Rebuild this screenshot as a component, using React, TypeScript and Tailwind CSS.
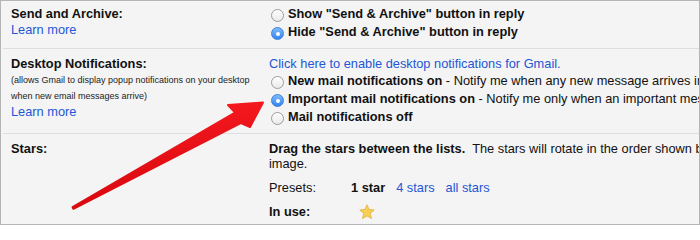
import React from "react";

function Radio({ checked }: { checked?: boolean }) {
  return checked ? (
    <span className="mt-[4px] ml-[2px] mr-[4px] flex size-[13px] shrink-0 items-center justify-center rounded-full border border-[#3b7fd9] bg-gradient-to-b from-[#7dbbfb] to-[#2f84f1]">
      <span className="size-[4px] rounded-full bg-white" />
    </span>
  ) : (
    <span className="mt-[4px] ml-[2px] mr-[4px] size-[13px] shrink-0 rounded-full border border-[#9c9c9c] bg-gradient-to-b from-white to-[#e9e9e9] shadow-[inset_0_1px_0_rgba(255,255,255,0.8)]" />
  );
}

function Item({ checked, children }: { checked?: boolean; children: React.ReactNode }) {
  return (
    <div className="flex h-[18px] items-start whitespace-nowrap">
      <Radio checked={checked} />
      <span className="leading-[18px]">{children}</span>
    </div>
  );
}

const link = "text-[#2356d4] cursor-pointer";

export default function App() {
  return (
    <div className="relative h-[225px] w-[700px] overflow-hidden border border-[#b5b5b5] bg-[#f4f4f4] font-['Liberation_Sans',Arial,sans-serif] text-[12.8px] leading-[16px] text-[#111]">
      {/* Row 1 */}
      <div className="ml-[2px] flex border-b border-[#dedede] pb-[7px] pl-[8px] pt-[4px]">
        <div className="w-[258px] shrink-0 pt-[1px]">
          <div className="font-bold">Send and Archive:</div>
          <div className={link}>Learn more</div>
        </div>
        <div className="flex flex-col">
          <Item>
            <b>Show "Send &amp; Archive" button in reply</b>
          </Item>
          <Item checked>
            <b>Hide "Send &amp; Archive" button in reply</b>
          </Item>
        </div>
      </div>

      {/* Row 2 */}
      <div className="ml-[2px] flex border-b border-[#dedede] pb-[7px] pl-[8px] pt-[7px]">
        <div className="w-[258px] shrink-0">
          <div className="font-bold">Desktop Notifications:</div>
          <div className="text-[9px] leading-[16px] text-[#222]">
            (allows Gmail to display popup notifications on your desktop
            <br />
            when new email messages arrive)
          </div>
          <div className={link}>Learn more</div>
        </div>
        <div className="flex flex-col whitespace-nowrap">
          <div className={link}>Click here to enable desktop notifications for Gmail.</div>
          <Item>
            <b>New mail notifications on</b> - Notify me when any new message arrives in my inbox or priority inbox
          </Item>
          <Item checked>
            <b>Important mail notifications on</b> - Notify me only when an important message arrives in my inbox
          </Item>
          <Item>
            <b>Mail notifications off</b>
          </Item>
        </div>
      </div>

      {/* Row 3 */}
      <div className="ml-[2px] flex pl-[8px] pt-[7px]">
        <div className="w-[258px] shrink-0 font-bold">Stars:</div>
        <div className="flex flex-col whitespace-nowrap">
          <div className="leading-[15px]">
            <b>Drag the stars between the lists.</b>
            {"\u00a0 The stars will rotate in the order shown below when you click successively. To learn the name of a star, hover your mouse over the"}
            <br />
            image.
          </div>
          <div className="mt-[9px] flex">
            <span className="w-[82px]">Presets:</span>
            <span className="font-bold">1 star</span>
            <span className={`ml-[11px] ${link}`}>4 stars</span>
            <span className={`ml-[11px] ${link}`}>all stars</span>
          </div>
          <div className="mt-[8px] flex items-center">
            <span className="w-[82px] font-bold">In use:</span>
            <svg className="ml-[8px]" width="16" height="16" viewBox="0 0 16 16">
              <polygon
                points="8,0.8 10.1,5.5 15.2,6 11.3,9.4 12.5,14.6 8,11.9 3.5,14.6 4.7,9.4 0.8,6 5.9,5.5"
                fill="#f8cf55"
                stroke="#e2b13a"
                strokeWidth="0.8"
                strokeLinejoin="round"
              />
            </svg>
          </div>
        </div>
      </div>

      {/* Red arrow overlay */}
      <svg
        className="pointer-events-none absolute left-[-1px] top-[-1px]"
        width="700"
        height="226"
        viewBox="0 0 700 226"
      >
        <defs>
          <linearGradient id="ar" x1="0" y1="0" x2="0.3" y2="1">
            <stop offset="0" stopColor="#ff1e24" />
            <stop offset="1" stopColor="#d4070d" />
          </linearGradient>
        </defs>
        <polygon
          points="72.6,207.2 235,112.5 228,105 263,102.5 250,127 240.8,123.1 73.4,208.8"
          fill="url(#ar)"
          stroke="url(#ar)"
          strokeWidth="2"
          strokeLinejoin="round"
        />
      </svg>
    </div>
  );
}
